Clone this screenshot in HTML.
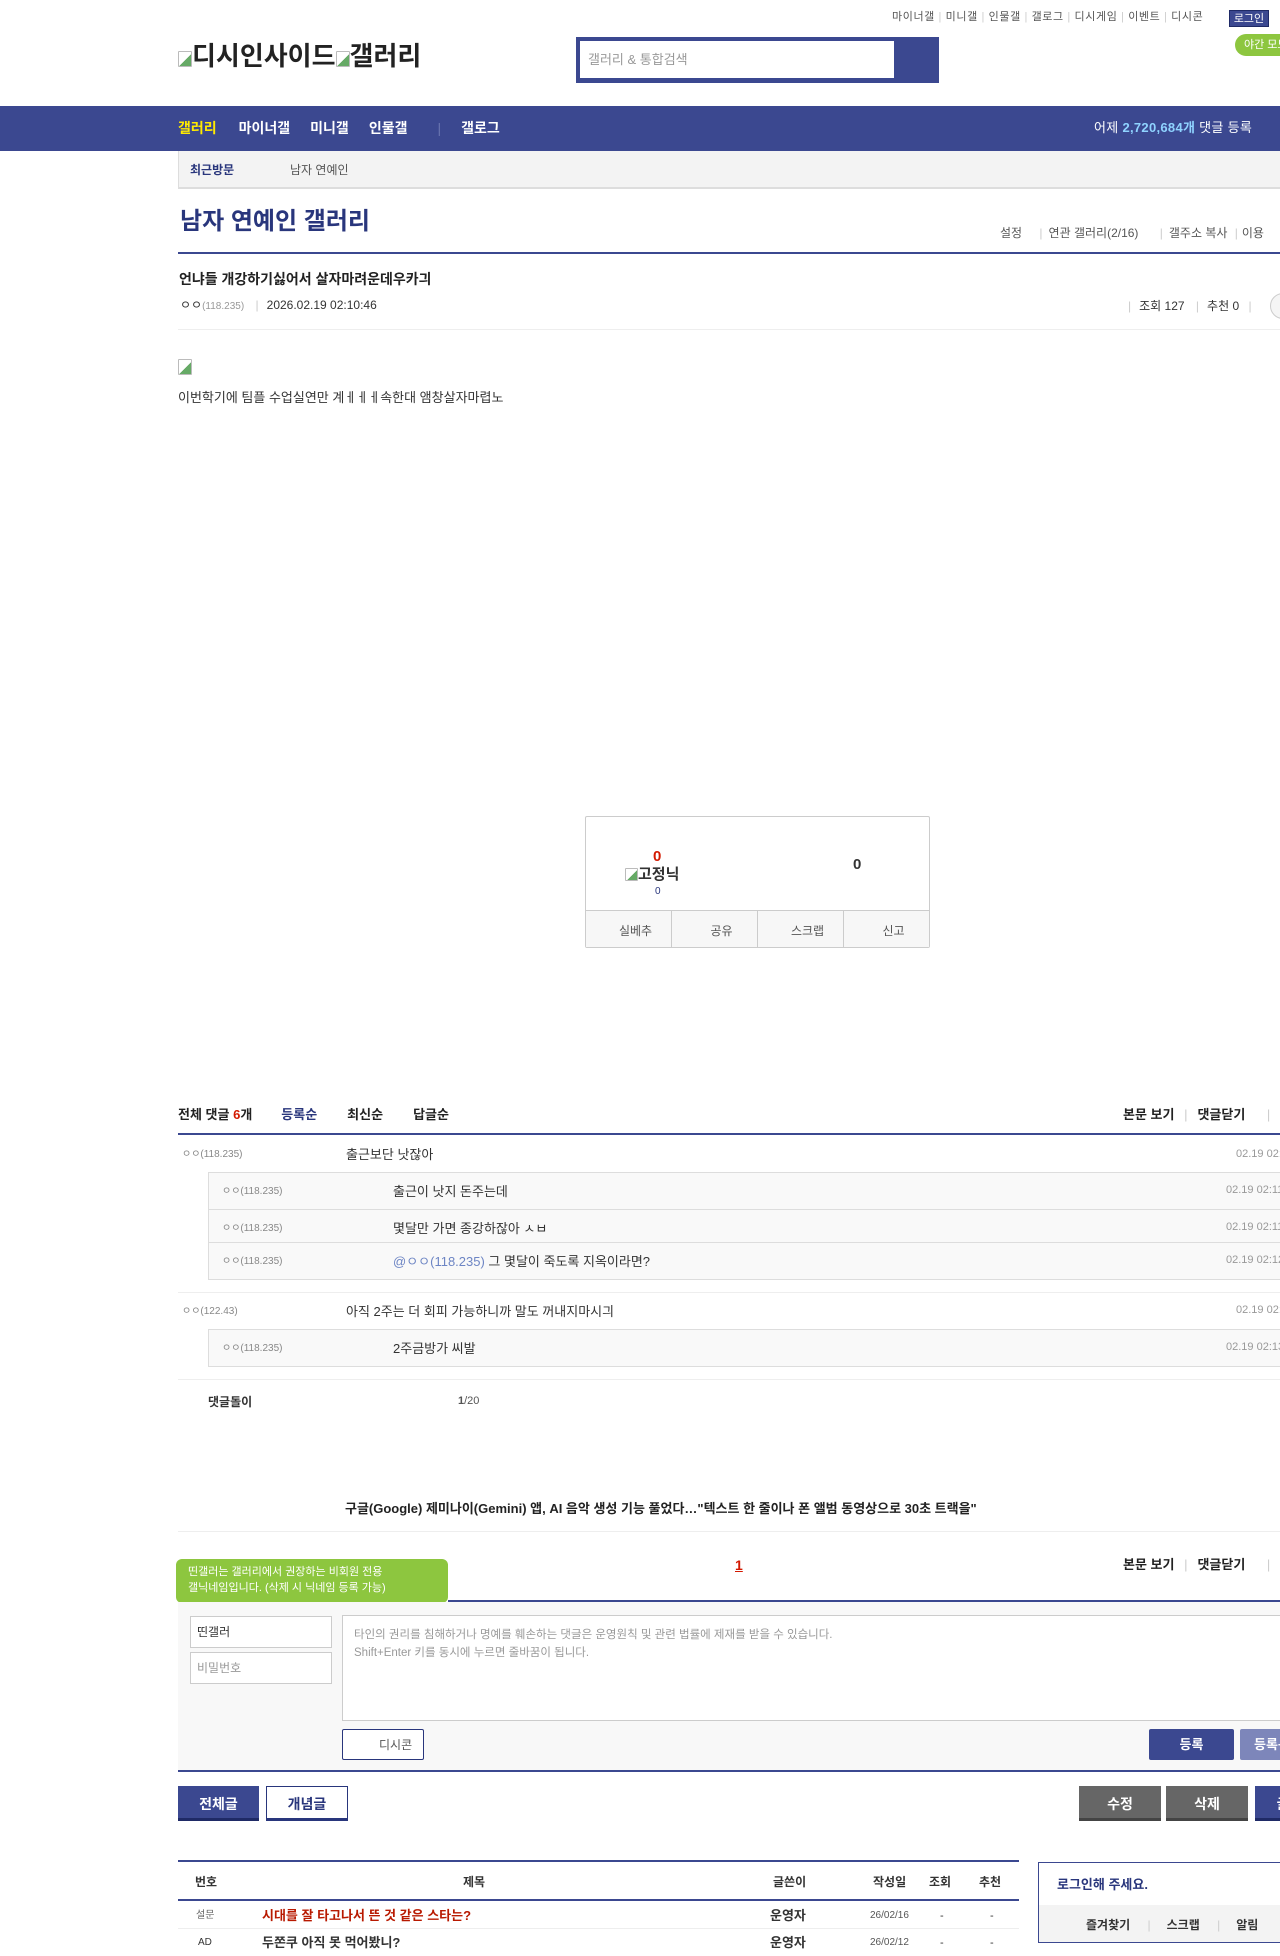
<!DOCTYPE html>
<html><head><meta charset="utf-8">
<style>
*{margin:0;padding:0;box-sizing:border-box}
html,body{width:1280px;height:1956px;overflow:hidden;background:#fff}
body{position:relative;font-family:"Liberation Sans","Noto Sans CJK KR",sans-serif;font-size:12px;color:#333}
.a{position:absolute;white-space:nowrap;line-height:16px}
.ln{position:absolute;height:1px;background:#e5e5e5}
.nl{position:absolute;height:2px;background:#3b4890}
.bi{display:inline-block;width:14px;height:16px;border:1px solid #bbb;border-radius:1px;vertical-align:-2px;background:linear-gradient(135deg,#fff 55%,#6a6 55%)}
.btn{position:absolute;color:#fff;font-weight:bold;font-size:14px;text-align:center;border-bottom:3px solid #1f2a66}
</style></head><body>

<!-- top links -->
<div class="a" style="left:892px;top:9px;font-size:11px;color:#555;letter-spacing:0.6px">마이너갤 <span style="color:#ccc">|</span> 미니갤 <span style="color:#ccc">|</span> 인물갤 <span style="color:#ccc">|</span> 갤로그 <span style="color:#ccc">|</span> 디시게임 <span style="color:#ccc">|</span> 이벤트 <span style="color:#ccc">|</span> 디시콘</div>
<div class="a" style="left:1229px;top:10px;width:40px;height:17px;background:#3b4890;color:#fff;font-size:11px;text-align:center;border:1px solid #1f2a66">로그인</div>
<div class="a" style="left:1235px;top:34px;width:60px;height:22px;background:#8dc63f;border-radius:11px;color:#fff;font-size:11px;padding:3px 0 0 9px">야간 모드</div>

<!-- logo -->
<div class="a" style="left:178px;top:40px;font-size:26px;line-height:32px;color:#222;font-weight:bold"><span class="bi"></span>디시인사이드<span class="bi"></span>갤러리</div>

<!-- search -->
<div class="a" style="left:576px;top:37px;width:363px;height:46px;background:#3b4890"></div>
<div class="a" style="left:580px;top:41px;width:314px;height:37px;background:#fff;color:#999;font-size:13px;padding:11px 8px">갤러리 &amp; 통합검색</div>

<!-- nav -->
<div class="a" style="left:0;top:106px;width:1280px;height:45px;background:#3b4890"></div>
<div class="a" style="left:178px;top:120px;font-size:14px;font-weight:bold;color:#fff"><span style="color:#ffea00">갤러리</span><span style="margin-left:22px">마이너갤</span><span style="margin-left:20px">미니갤</span><span style="margin-left:20px">인물갤</span><span style="margin-left:30px;color:#6a75b0;font-weight:normal">|</span><span style="margin-left:20px">갤로그</span></div>
<div class="a" style="left:1094px;top:120px;font-size:13px;color:#fff;letter-spacing:0.3px">어제 <b style="color:#8fd3ff">2,720,684개</b> 댓글 등록</div>

<!-- sub bar -->
<div class="a" style="left:178px;top:151px;width:1102px;height:38px;background:#f3f3f3;border-left:1px solid #ddd;border-bottom:2px solid #ddd"></div>
<div class="a" style="left:190px;top:162px;font-size:12px;font-weight:bold;color:#29367c">최근방문</div>
<div class="a" style="left:290px;top:162px;font-size:12px;color:#555">남자 연예인</div>

<!-- gallery title -->
<div class="a" style="left:180px;top:207px;font-size:24px;line-height:30px;font-weight:bold;color:#29367c">남자 연예인 갤러리</div>
<div class="a" style="left:1000px;top:225px;font-size:12px;color:#555">설정 <span style="color:#ccc;margin:0 6px 0 14px">|</span>연관 갤러리(2/16) <span style="color:#ccc;margin:0 6px 0 18px">|</span>갤주소 복사 <span style="color:#ccc;margin:0 4px">|</span>이용</div>
<div class="nl" style="left:178px;top:252px;width:1102px"></div>

<!-- post header -->
<div class="a" style="left:179px;top:271px;font-size:14px;font-weight:bold;color:#222">언냐들 개강하기싫어서 살자마려운데우카긔</div>
<div class="a" style="left:180px;top:297px;font-size:12px;color:#333">ㅇㅇ<span style="font-size:10px;color:#999">(118.235)</span> <span style="color:#ccc;margin:0 8px">|</span>2026.02.19 02:10:46</div>
<div class="a" style="left:1128px;top:298px;font-size:12px;color:#333"><span style="color:#ccc;margin-right:8px">|</span>조회 127 <span style="color:#ccc;margin:0 8px">|</span>추천 0 <span style="color:#ccc;margin-left:6px">|</span></div>
<div class="a" style="left:1270px;top:293px;width:26px;height:26px;border:1px solid #ccc;border-radius:13px;background:#f5f5f5"></div>
<div class="ln" style="left:178px;top:329px;width:1102px;background:#eee"></div>

<!-- body -->
<div class="a" style="left:178px;top:359px"><span class="bi"></span></div>
<div class="a" style="left:178px;top:390px;font-size:13px;color:#333">이번학기에 팀플 수업실연만 계ㅔㅔㅔ속한대 앰창살자마렵노</div>

<!-- recommend box -->
<div class="a" style="left:585px;top:816px;width:345px;height:132px;border:1px solid #ccc;border-radius:2px"></div>
<div class="a" style="left:653px;top:849px;font-size:15px;font-weight:bold;color:#d31900">0</div>
<div class="a" style="left:625px;top:867px;font-size:15px;font-weight:bold;color:#333"><span class="bi" style="width:13px;height:13px"></span>고정닉</div>
<div class="a" style="left:655px;top:884px;font-size:10px;color:#29367c">0</div>
<div class="a" style="left:853px;top:857px;font-size:15px;font-weight:bold;color:#333">0</div>
<div class="a" style="left:586px;top:910px;width:343px;height:37px;background:#f7f7f7;border-top:1px solid #ccc;display:flex">
 <div style="flex:1;border-right:1px solid #ccc;text-align:center;padding:12px 0 0 14px;color:#555;font-size:12px">실베추</div>
 <div style="flex:1;border-right:1px solid #ccc;text-align:center;padding:12px 0 0 14px;color:#555;font-size:12px">공유</div>
 <div style="flex:1;border-right:1px solid #ccc;text-align:center;padding:12px 0 0 14px;color:#555;font-size:12px">스크랩</div>
 <div style="flex:1;text-align:center;padding:12px 0 0 14px;color:#555;font-size:12px">신고</div>
</div>

<!-- comments header -->
<div class="a" style="left:178px;top:1107px;font-size:13px;font-weight:bold;color:#222">전체 댓글 <span style="color:#d31900">6</span>개<span style="color:#29367c;margin-left:29px">등록순</span><span style="margin-left:30px">최신순</span><span style="margin-left:30px">답글순</span></div>
<div class="a" style="left:1123px;top:1107px;font-size:13px;font-weight:bold;color:#222">본문 보기 <span style="color:#ccc;font-weight:normal;margin:0 10px 0 6px">|</span>댓글닫기 <span style="color:#ccc;font-weight:normal;margin-left:18px">|</span></div>
<div class="nl" style="left:178px;top:1133px;width:1102px"></div>

<!-- comment 1 -->
<div class="a" style="left:182px;top:1147px;font-size:10px;color:#888">ㅇㅇ(118.235)</div>
<div class="a" style="left:346px;top:1147px;font-size:13px;color:#333">출근보단 낫잖아</div>
<div class="a" style="left:1236px;top:1146px;font-size:11px;color:#999">02.19 02:10:46</div>
<div class="a" style="left:208px;top:1172px;width:1072px;height:108px;background:#f9f9f9;border:1px solid #ddd;border-right:0"></div>
<div class="ln" style="left:209px;top:1209px;width:1071px;background:#ddd"></div>
<div class="ln" style="left:209px;top:1242px;width:1071px;background:#ddd"></div>
<div class="a" style="left:222px;top:1184px;font-size:10px;color:#888">ㅇㅇ(118.235)</div>
<div class="a" style="left:393px;top:1184px;font-size:13px">출근이 낫지 돈주는데</div>
<div class="a" style="left:1226px;top:1182px;font-size:11px;color:#999">02.19 02:11:20</div>
<div class="a" style="left:222px;top:1221px;font-size:10px;color:#888">ㅇㅇ(118.235)</div>
<div class="a" style="left:393px;top:1221px;font-size:13px">몇달만 가면 종강하잖아 ㅅㅂ</div>
<div class="a" style="left:1226px;top:1219px;font-size:11px;color:#999">02.19 02:11:55</div>
<div class="a" style="left:222px;top:1254px;font-size:10px;color:#888">ㅇㅇ(118.235)</div>
<div class="a" style="left:393px;top:1254px;font-size:13px"><span style="color:#6d85c4">@ㅇㅇ(118.235)</span> 그 몇달이 죽도록 지옥이라면?</div>
<div class="a" style="left:1226px;top:1252px;font-size:11px;color:#999">02.19 02:12:30</div>
<div class="ln" style="left:178px;top:1292px;width:1102px;background:#eee"></div>

<!-- comment 2 -->
<div class="a" style="left:182px;top:1304px;font-size:10px;color:#888">ㅇㅇ(122.43)</div>
<div class="a" style="left:346px;top:1304px;font-size:13px">아직 2주는 더 회피 가능하니까 말도 꺼내지마시긔</div>
<div class="a" style="left:1236px;top:1302px;font-size:11px;color:#999">02.19 02:13:01</div>
<div class="a" style="left:208px;top:1329px;width:1072px;height:38px;background:#f9f9f9;border:1px solid #ddd;border-right:0"></div>
<div class="a" style="left:222px;top:1341px;font-size:10px;color:#888">ㅇㅇ(118.235)</div>
<div class="a" style="left:393px;top:1341px;font-size:13px">2주금방가 씨발</div>
<div class="a" style="left:1226px;top:1339px;font-size:11px;color:#999">02.19 02:13:40</div>
<div class="ln" style="left:178px;top:1379px;width:1102px;background:#eee"></div>

<div class="a" style="left:208px;top:1394px;font-size:12px;font-weight:bold;color:#333">댓글돌이</div>
<div class="a" style="left:458px;top:1393px;font-size:11px;color:#555"><b>1</b>/20</div>

<div class="a" style="left:345px;top:1501px;font-size:13px;font-weight:bold;color:#222">구글(Google) 제미나이(Gemini) 앱, AI 음악 생성 기능 풀었다…"텍스트 한 줄이나 폰 앨범 동영상으로 30초 트랙을"</div>
<div class="ln" style="left:178px;top:1531px;width:1102px;background:#eee"></div>

<!-- tooltip & pager -->
<div class="a" style="left:176px;top:1559px;width:272px;height:44px;background:#8dc63f;border-radius:6px;color:#fff;font-size:11px;line-height:16px;padding:5px 0 0 12px">띤갤러는 갤러리에서 권장하는 비회원 전용<br>갤닉네임입니다. (삭제 시 닉네임 등록 가능)</div>
<div class="a" style="left:205px;top:1603px;width:0;height:0;border-left:5px solid transparent;border-right:5px solid transparent;border-top:7px solid #8dc63f"></div>
<div class="a" style="left:735px;top:1557px;font-size:14px;font-weight:bold;color:#d31900;text-decoration:underline">1</div>
<div class="a" style="left:1123px;top:1557px;font-size:13px;font-weight:bold;color:#222">본문 보기 <span style="color:#ccc;font-weight:normal;margin:0 10px 0 6px">|</span>댓글닫기 <span style="color:#ccc;font-weight:normal;margin-left:18px">|</span></div>
<div class="nl" style="left:448px;top:1600px;width:832px"></div>

<!-- comment form -->
<div class="a" style="left:178px;top:1602px;width:1102px;height:168px;background:#f8f8f8"></div>
<div class="a" style="left:190px;top:1616px;width:142px;height:32px;background:#fff;border:1px solid #ccc;font-size:12px;color:#333;padding:7px 6px">띤갤러</div>
<div class="a" style="left:190px;top:1652px;width:142px;height:32px;background:#fff;border:1px solid #ccc;font-size:12px;color:#999;padding:7px 6px">비밀번호</div>
<div class="a" style="left:342px;top:1615px;width:960px;height:106px;background:#fff;border:1px solid #ccc;font-size:11.5px;line-height:18px;color:#999;padding:10px 11px;white-space:normal">타인의 권리를 침해하거나 명예를 훼손하는 댓글은 운영원칙 및 관련 법률에 제재를 받을 수 있습니다.<br>Shift+Enter 키를 동시에 누르면 줄바꿈이 됩니다.</div>
<div class="a" style="left:342px;top:1729px;width:82px;height:31px;background:#fff;border:1px solid #29367c;border-radius:2px;font-size:12px;color:#555;padding:7px 0 0 36px">디시콘</div>
<div class="a" style="left:1149px;top:1729px;width:85px;height:31px;background:#3b4890;border-radius:2px;color:#fff;font-size:13px;font-weight:bold;text-align:center;padding-top:8px">등록</div>
<div class="a" style="left:1240px;top:1729px;width:85px;height:31px;background:#7d86ba;border-radius:2px;color:#fff;font-size:13px;font-weight:bold;padding:8px 0 0 14px">등록+추천</div>
<div class="nl" style="left:178px;top:1770px;width:1102px"></div>

<!-- action buttons -->
<div class="btn" style="left:178px;top:1786px;width:81px;height:35px;background:#3b4890;padding-top:8px">전체글</div>
<div class="btn" style="left:266px;top:1786px;width:82px;height:35px;background:#fff;color:#29367c;border:1px solid #29367c;border-bottom:3px solid #29367c;padding-top:7px">개념글</div>
<div class="btn" style="left:1079px;top:1786px;width:82px;height:35px;background:#666;border-bottom-color:#444;padding-top:8px">수정</div>
<div class="btn" style="left:1166px;top:1786px;width:82px;height:35px;background:#666;border-bottom-color:#444;padding-top:8px">삭제</div>
<div class="btn" style="left:1255px;top:1786px;width:82px;height:35px;background:#3b4890;padding-top:8px">글쓰기</div>

<!-- list -->
<div class="nl" style="left:178px;top:1860px;width:841px"></div>
<div class="a" style="left:195px;top:1874px;font-size:12px;font-weight:bold;color:#333">번호</div>
<div class="a" style="left:463px;top:1874px;font-size:12px;font-weight:bold;color:#333">제목</div>
<div class="a" style="left:773px;top:1874px;font-size:12px;font-weight:bold;color:#333">글쓴이</div>
<div class="a" style="left:873px;top:1874px;font-size:12px;font-weight:bold;color:#333">작성일</div>
<div class="a" style="left:929px;top:1874px;font-size:12px;font-weight:bold;color:#333">조회</div>
<div class="a" style="left:979px;top:1874px;font-size:12px;font-weight:bold;color:#333">추천</div>
<div class="ln" style="left:178px;top:1899px;width:841px;height:2px;background:#3b4890"></div>
<div class="a" style="left:196px;top:1908px;font-size:10px;color:#666">설문</div>
<div class="a" style="left:262px;top:1908px;font-size:13px;font-weight:bold;color:#b81900">시대를 잘 타고나서 뜬 것 같은 스타는?</div>
<div class="a" style="left:770px;top:1908px;font-size:13px;font-weight:bold;color:#333">운영자</div>
<div class="a" style="left:870px;top:1908px;font-size:10px;color:#555">26/02/16</div>
<div class="a" style="left:940px;top:1908px;font-size:11px">-</div>
<div class="a" style="left:990px;top:1908px;font-size:11px">-</div>
<div class="ln" style="left:178px;top:1928px;width:841px;background:#eee"></div>
<div class="a" style="left:198px;top:1935px;font-size:10px;color:#333">AD</div>
<div class="a" style="left:262px;top:1935px;font-size:13px;font-weight:bold;color:#333">두쫀쿠 아직 못 먹어봤니?</div>
<div class="a" style="left:770px;top:1935px;font-size:13px;font-weight:bold;color:#333">운영자</div>
<div class="a" style="left:870px;top:1935px;font-size:10px;color:#555">26/02/12</div>
<div class="a" style="left:940px;top:1935px;font-size:11px">-</div>
<div class="a" style="left:990px;top:1935px;font-size:11px">-</div>

<!-- login box -->
<div class="a" style="left:1038px;top:1862px;width:260px;height:81px;border:1px solid #3b4890;background:#fff"></div>
<div class="a" style="left:1039px;top:1905px;width:260px;height:37px;background:#f3f3f3"></div>
<div class="a" style="left:1057px;top:1877px;font-size:13px;font-weight:bold;color:#29367c">로그인해 주세요.</div>
<div class="a" style="left:1086px;top:1917px;font-size:12px;font-weight:bold;color:#333">즐겨찾기 <span style="color:#ccc;font-weight:normal;margin:0 16px 0 14px">|</span>스크랩 <span style="color:#ccc;font-weight:normal;margin:0 16px 0 14px">|</span>알림</div>

</body></html>
